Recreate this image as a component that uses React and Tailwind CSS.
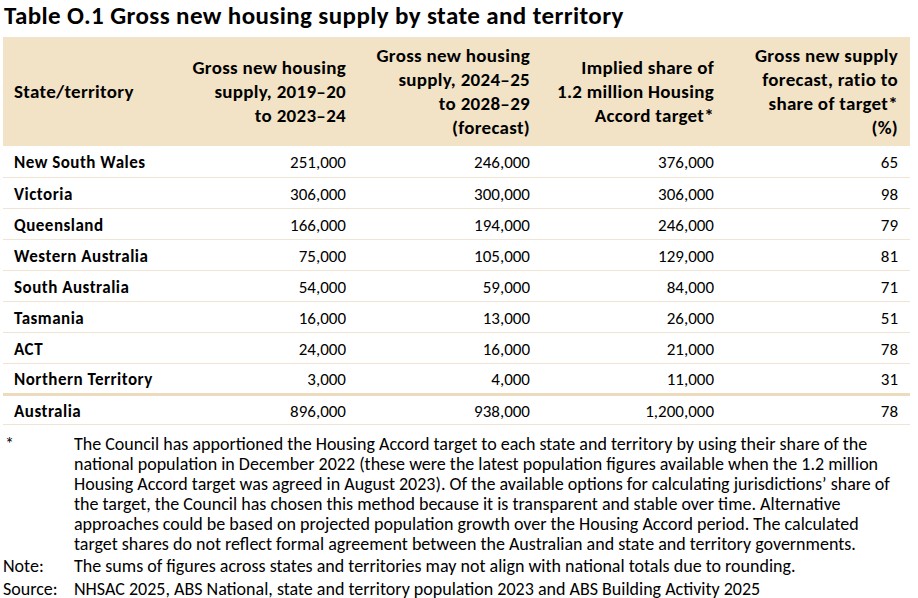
const rows = [
  ["New South Wales", "251,000", "246,000", "376,000", "65"],
  ["Victoria", "306,000", "300,000", "306,000", "98"],
  ["Queensland", "166,000", "194,000", "246,000", "79"],
  ["Western Australia", "75,000", "105,000", "129,000", "81"],
  ["South Australia", "54,000", "59,000", "84,000", "71"],
  ["Tasmania", "16,000", "13,000", "26,000", "51"],
  ["ACT", "24,000", "16,000", "21,000", "78"],
  ["Northern Territory", "3,000", "4,000", "11,000", "31"],
];

const total = ["Australia", "896,000", "938,000", "1,200,000", "78"];

const noteLines = [
  "The Council has apportioned the Housing Accord target to each state and territory by using their share of the",
  "national population in December 2022 (these were the latest population figures available when the 1.2 million",
  "Housing Accord target was agreed in August 2023). Of the available options for calculating jurisdictions’ share of",
  "the target, the Council has chosen this method because it is transparent and stable over time. Alternative",
  "approaches could be based on projected population growth over the Housing Accord period. The calculated",
  "target shares do not reflect formal agreement between the Australian and state and territory governments.",
];

function Row({ cells, last, height = "h-[31px]" }) {
  return (
    <tr
      className={`${height} ${
        last ? "border-b-[3px] border-[#ecdbbd]" : "border-b border-[#efe5d2]"
      }`}
    >
      <td className="pl-[11px] pt-[4px] font-bold tracking-[0.5px]">{cells[0]}</td>
      {cells.slice(1).map((c, i) => (
        <td key={i} className="pr-[12px] pt-[4px] text-right">
          {c}
        </td>
      ))}
    </tr>
  );
}

export default function App() {
  return (
    <div className="w-[918px] h-[598px] bg-white text-black overflow-hidden font-['Carlito','Calibri','Lato',sans-serif]">
      <h1 className="pl-[4px] h-[37px] text-[25px] leading-[32px] tracking-[0.4px] font-bold">
        Table O.1 Gross new housing supply by state and territory
      </h1>

      <table className="ml-[3px] w-[907px] border-collapse table-fixed text-[17px] leading-[20px]">
        <colgroup>
          <col className="w-[171px]" />
          <col className="w-[184px]" />
          <col className="w-[184px]" />
          <col className="w-[184px]" />
          <col className="w-[184px]" />
        </colgroup>
        <thead>
          <tr className="h-[109px] bg-[#f2e3c6] text-[19px] leading-[24px] tracking-[0.3px]">
            <th className="pl-[11px] text-left align-middle font-bold">State/territory</th>
            <th className="pr-[12px] text-right align-middle font-bold">
              Gross new housing
              <br />
              supply, 2019–20
              <br />
              to 2023–24
            </th>
            <th className="pr-[12px] text-right align-middle font-bold">
              Gross new housing
              <br />
              supply, 2024–25
              <br />
              to 2028–29
              <br />
              (forecast)
            </th>
            <th className="pr-[12px] text-right align-middle font-bold">
              Implied share of
              <br />
              1.2 million Housing
              <br />
              Accord target*
            </th>
            <th className="pr-[12px] text-right align-middle font-bold">
              Gross new supply
              <br />
              forecast, ratio to
              <br />
              share of target*
              <br />
              (%)
            </th>
          </tr>
        </thead>
        <tbody>
          {rows.map((r, i) => (
            <Row key={r[0]} cells={r} last={i === rows.length - 1} />
          ))}
          <Row cells={total} height="h-[30px]" />
        </tbody>
      </table>

      <div className="mt-[9px] grid grid-cols-[74px_1fr] text-[18px] leading-[20px]">
        <div className="pl-[5px]">*</div>
        <div>
          {noteLines.map((l) => (
            <div key={l} className="whitespace-nowrap">
              {l}
            </div>
          ))}
        </div>
        <div className="pl-[3px] pt-[2px]">Note:</div>
        <div className="pt-[2px] whitespace-nowrap">
          The sums of figures across states and territories may not align with national totals due to rounding.
        </div>
        <div className="pl-[3px] pt-[4px] leading-[18px]">Source:</div>
        <div className="pt-[4px] leading-[18px] whitespace-nowrap">
          NHSAC 2025, ABS National, state and territory population 2023 and ABS Building Activity 2025
        </div>
      </div>
    </div>
  );
}
